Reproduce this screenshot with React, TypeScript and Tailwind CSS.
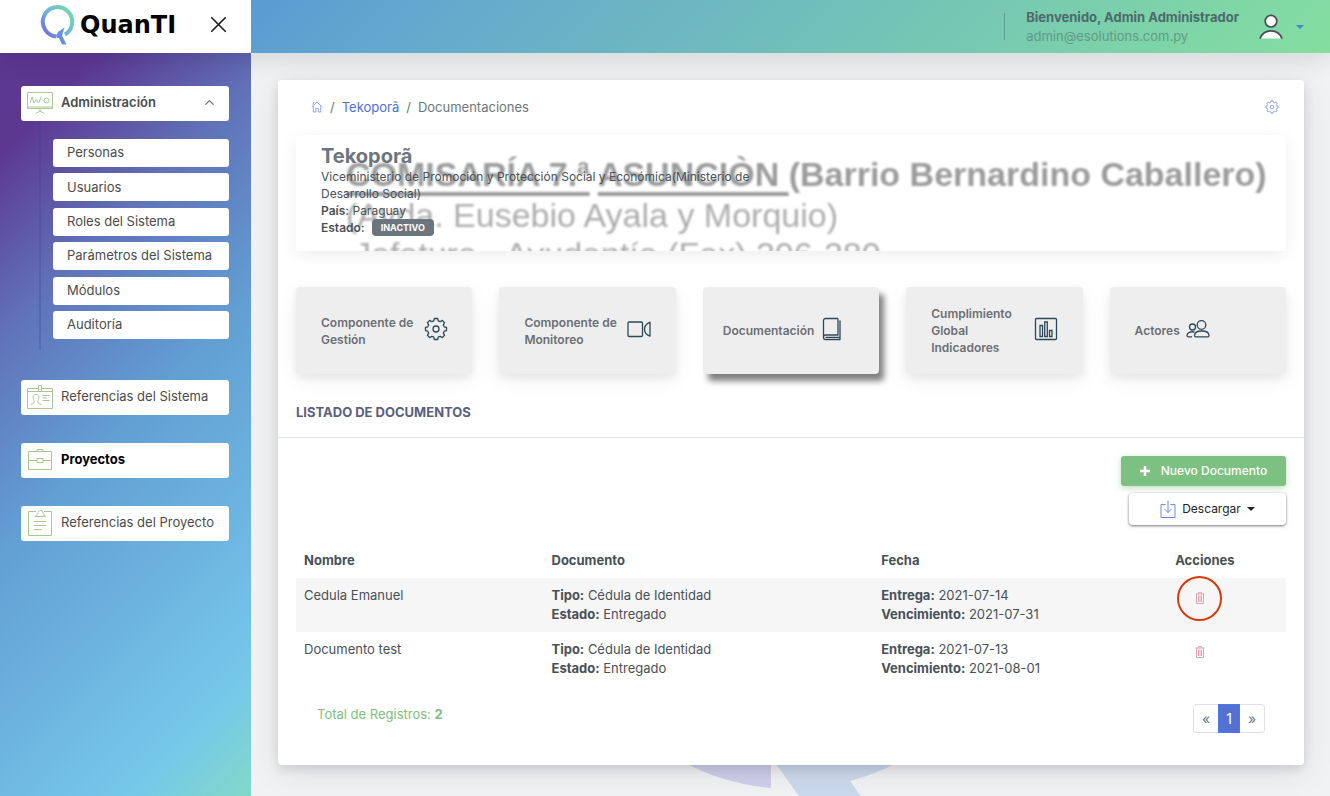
import React from 'react';
import { X, ChevronUp } from 'lucide-react';
import { clsx } from 'clsx';

type IconProps = { className?: string };

const Line = ({ className, box = '0 0 26 26', children }: IconProps & { box?: string; children: React.ReactNode }) => (
  <svg className={className} viewBox={box} fill="none" stroke="currentColor" aria-hidden="true">
    {children}
  </svg>
);

const BoardIcon = ({ className }: IconProps) => (
  <Line className={className}>
    <path d="M.500 2.500h25v16H.500zM.500 17h25M13 18.500v3M13 21l-4.500 2.500M13 21l4.500 2.500" />
    <path d="M3 13l2-6 2 6 2-3.500 2.500 3.500L14.500 6.500" />
    <circle cx="19.500" cy="10.500" r="2.500" />
  </Line>
);

const BadgeIcon = ({ className }: IconProps) => (
  <Line className={className}>
    <path d="M.500 4.500h11M14.500 4.500h11v20H.500v-20M.500 7.500h11M14.500 7.500h11M11.500 1.500h3v6h-3z" />
    <path d="M3.500 20.500c3-1 4.500-1.500 3.500-4C5 13 6.500 10.500 9 10.500s4 2.500 2 6c-1 2.500 .500 3 3.500 4M15.500 11.500h7M15.500 14h4.500M15.500 16.500h7" />
  </Line>
);

const BriefcaseIcon = ({ className }: IconProps) => (
  <Line className={className}>
    <path d="M1.500 4.500h23v18h-23zM10 4.500v-2h6v2M1.500 13.500H10M16 13.500h8.500M10 11.500h6v4h-6z" />
  </Line>
);

const ClipboardIcon = ({ className }: IconProps) => (
  <Line className={className}>
    <path d="M9 1.500H1.500v24h23v-24H17M8 6.500h10.500L16 3.500C16 1.500 15 .500 13.500 .500S11 1.500 11 3.500zM7 11.500h12M7 15.500h12M7 19.500h8" />
  </Line>
);

const gearPath =
  'M10.300 1.500h3.400l.500 2.300 2 .9 2.100-1.300 2.300 2.300-1.300 2.100.900 2 2.300.500v3.400l-2.300.500-.900 2 1.300 2.100-2.300 2.300-2.100-1.300-2 .900-.500 2.300h-3.400l-.500-2.300-2-.900-2.100 1.300-2.300-2.300 1.300-2.100-.900-2-2.300-.500v-3.400l2.300-.500.900-2-1.300-2.100 2.300-2.300 2.100 1.300 2-.900z';

const GearIcon = ({ className }: IconProps) => (
  <Line className={className} box="0 0 24 24">
    <path d={gearPath} strokeWidth="1.300" strokeLinejoin="round" />
    <circle cx="12" cy="12" r="3" strokeWidth="1.300" />
  </Line>
);

const VideoIcon = ({ className }: IconProps) => (
  <Line className={className} box="0 0 24 24">
    <rect x="1" y="5" width="14.500" height="14.500" rx="1.200" strokeWidth="1.300" />
    <path d="M23 5.200v14c-3.500-1.500-5.500-4-5.500-7s2-5.500 5.500-7z" strokeWidth="1.300" strokeLinejoin="round" />
  </Line>
);

const BookIcon = ({ className }: IconProps) => (
  <Line className={className} box="0 0 24 24">
    <path d="M18 1.500H5.500a2 2 0 0 0-2 2v17a2 2 0 0 0 2 2H20V3.500M18 1.500v16.500H5.500a2 2 0 0 0-2 2M20 20.300H5.500" strokeWidth="1.300" strokeLinejoin="round" />
  </Line>
);

const ChartIcon = ({ className }: IconProps) => (
  <Line className={className} box="0 0 24 24">
    <rect x="1.500" y="1.500" width="21" height="21" rx="1" strokeWidth="1.300" />
    <path d="M6 8.500h2.500v11H6zM10.700 5h2.600v14.500h-2.600zM15.500 13.500H18v6h-2.500z" strokeWidth="1.300" />
  </Line>
);

const PeopleIcon = ({ className }: IconProps) => (
  <Line className={className} box="0 0 24 24">
    <g strokeWidth="1.300">
      <circle cx="15.500" cy="8" r="4.300" />
      <circle cx="6.500" cy="10" r="3" />
      <path d="M8.500 18.500c0-3 3-4.500 7.200-4.500s7.300 1.500 7.300 4.500c0 .800-.500 1.300-1.300 1.300H9.800c-.8 0-1.300-.500-1.300-1.300zM8.500 15c-4-.800-7.500.700-7.500 3.300 0 1 .500 1.500 1.300 1.500H6" />
    </g>
  </Line>
);

const HomeIcon = ({ className }: IconProps) => (
  <Line className={className} box="0 0 12 12">
    <path d="M.700 6 6 1.200 11.300 6M2.300 5v6h2.500V7.300h2.400V11h2.500V5M2.300 3.800V1.500h1.200" strokeWidth=".8" />
  </Line>
);

const DownloadIcon = ({ className }: IconProps) => (
  <Line className={className} box="0 0 16 18">
    <path d="M5.500 4.500H1v13h14v-13h-4.500M8 .5v12M4.500 9 8 12.500 11.500 9" />
  </Line>
);

const TrashIcon = ({ className }: IconProps) => (
  <Line className={className} box="0 0 10 12">
    <path d="M.500 2h9M3.500 2V.600h3V2M1.500 2v9.500h7V2M3.500 3.500V10M5 3.500V10M6.500 3.500V10" strokeWidth=".9" />
  </Line>
);

const UserIcon = ({ className }: IconProps) => (
  <svg className={className} viewBox="0 0 26 27" fill="#fff" stroke="#484b55" strokeWidth="1.800" aria-hidden="true">
    <circle cx="13" cy="7.500" r="6" />
    <path d="M1.500 25.500C4 19.500 8 17.500 13 17.500s9 2 11.500 8" />
  </svg>
);

const Caret = ({ className }: IconProps) => (
  <svg className={className} viewBox="0 0 8 4" fill="currentColor" aria-hidden="true">
    <path d="M0 0h8L4 4z" />
  </svg>
);

const Logo = () => (
  <a href="#" className="flex items-center gap-1 text-black">
    <svg className="h-10 w-9" viewBox="0 0 36 40" fill="none" aria-hidden="true">
      <defs>
        <linearGradient id="ring" x1="4" y1="30" x2="30" y2="6" gradientUnits="userSpaceOnUse">
          <stop stopColor="#7867dc" />
          <stop offset=".5" stopColor="#68b5e2" />
          <stop offset="1" stopColor="#77d7ae" />
        </linearGradient>
      </defs>
      <path d="M16.500 31.500A14.700 14.700 0 1 1 25 29.500" stroke="url(#ring)" strokeWidth="4" />
      <path d="M24.500 22.500 18 27l-2 4 1.500 2 1.500 0 3 6.500h4.500l-4.500-9z" fill="#668fdf" />
    </svg>
    <span className="font-['DejaVu_Sans'] text-2xl leading-8 font-bold">QuanTI</span>
  </a>
);

const adminLinks = ['Personas', 'Usuarios', 'Roles del Sistema', 'Parámetros del Sistema', 'Módulos', 'Auditoría'];

const menu = [
  { label: 'Referencias del Sistema', icon: BadgeIcon, active: false },
  { label: 'Proyectos', icon: BriefcaseIcon, active: true },
  { label: 'Referencias del Proyecto', icon: ClipboardIcon, active: false },
];

const components = [
  { label: 'Componente de Gestión', icon: GearIcon, pad: 'pl-[25px]', text: 'w-[97px]' },
  { label: 'Componente de Monitoreo', icon: VideoIcon, pad: 'pl-[25px]', text: 'w-[97px]' },
  { label: 'Documentación', icon: BookIcon, pad: 'pl-5', text: '', active: true },
  { label: 'Cumplimiento Global Indicadores', icon: ChartIcon, pad: 'pl-[25px]', text: 'w-[97px]' },
  { label: 'Actores', icon: PeopleIcon, pad: 'pl-[25px]', text: '' },
];

const documents = [
  { name: 'Cedula Emanuel', type: 'Cédula de Identidad', status: 'Entregado', delivered: '2021-07-14', expires: '2021-07-31', marked: true },
  { name: 'Documento test', type: 'Cédula de Identidad', status: 'Entregado', delivered: '2021-07-13', expires: '2021-08-01', marked: false },
];

const Header = () => (
  <header className="relative z-20 flex h-[53px] shadow-[0_6px_24px_rgba(4,9,20,0.12)]">
    <div className="flex w-[251px] shrink-0 items-center justify-between bg-white pr-[19px] pb-1 pl-10">
      <Logo />
      <button type="button" aria-label="Cerrar menú" className="text-[#222]">
        <X size={27} strokeWidth={1.5} />
      </button>
    </div>
    <div className="flex flex-1 items-center justify-end bg-linear-[135deg,#5a9bd2_0%,#62a8cf_15%,#84de9f_100%] pr-[26px]">
      <div className="flex h-[27px] items-center border-l border-[#5e9f93] pl-[21px]">
        <div className="text-[13px] leading-[19px]">
          <p className="font-bold text-[#4d6a68]">Bienvenido, Admin Administrador</p>
          <p className="text-[#639b86]">admin@esolutions.com.py</p>
        </div>
      </div>
      <button type="button" aria-label="Cuenta" className="ml-[19px] flex items-center gap-3">
        <UserIcon className="h-[26px] w-[26px]" />
        <Caret className="h-1 w-2 text-[#4c82d0]" />
      </button>
    </div>
  </header>
);

const Sidebar = () => (
  <nav className="w-[251px] shrink-0 bg-linear-[135deg,#5c3891_0%,#5c3891_10%,#6071b8_28%,#629fd3_50%,#72bfe7_80%,#76c9e8_88%,#81d9c8_100%] pt-[33px] pr-[22px] pl-[21px] text-[13px] text-[#4b4b4b]">
    <button type="button" className="flex h-[35px] w-full items-center rounded-[3px] bg-white pr-3 pb-0.5 pl-1.5 font-semibold">
      <BoardIcon className="mr-2 h-[26px] w-[26px] text-[#a9c794]" />
      Administración
      <ChevronUp size={15} strokeWidth={2} className="ml-auto text-gray-500" />
    </button>
    <div className="ml-[18px] h-[229px] border-l-2 border-[#3b3b9a]/25 pt-[18px] pl-3">
      <ul className="flex h-[200px] flex-col justify-between">
        {adminLinks.map(label => (
          <li key={label}>
            <a href="#" className="flex h-7 items-center rounded-[3px] bg-white px-3.5">{label}</a>
          </li>
        ))}
      </ul>
    </div>
    <ul className="mt-[30px] space-y-7">
      {menu.map(item => (
        <li key={item.label}>
          <a href="#" className={clsx('flex h-[35px] items-center gap-2 rounded-[3px] bg-white px-1.5 pb-0.5', item.active && 'font-bold text-black')}>
            <item.icon className="h-[26px] w-[26px] text-[#a9c794]" />
            {item.label}
          </a>
        </li>
      ))}
    </ul>
  </nav>
);

const ProjectBanner = () => (
  <section className="relative mt-[15px] h-[116px] overflow-hidden rounded bg-white shadow-[0_4px_16px_rgba(4,9,20,0.07)]">
    <div className="absolute top-5 left-[50px] font-['Liberation_Sans'] text-[34px] leading-[39px] whitespace-nowrap text-[#adadad] blur-[1px]" aria-hidden="true">
      <p className="mb-0.5 font-bold text-[#9b9b9b]">
        <span className="underline decoration-4 underline-offset-6 [text-decoration-skip-ink:none]">COMISARÍA 7.ª</span>{' '}
        <span className="underline decoration-4 underline-offset-6 [text-decoration-skip-ink:none]">ASUNCIÒN </span>
        (Barrio Bernardino Caballero)
      </p>
      <p>(Avda. Eusebio Ayala y Morquio)</p>
      <p className="pl-2">Jefatura - Ayudantía (Fax) 206-280</p>
    </div>
    <div className="relative w-[465px] pt-[9px] pl-[25px] text-xs leading-[17px] text-[#495057]">
      <h1 className="text-xl leading-6 font-bold text-[#6c757d]">Tekoporã</h1>
      <p>Viceministerio de Promoción y Protección Social y Económica(Ministerio de Desarrollo Social)</p>
      <p><b className="font-semibold">País:</b> Paraguay</p>
      <p className="flex items-center gap-[7px]">
        <b className="font-semibold">Estado:</b>
        <span className="rounded bg-[#6c757d] px-[9px] text-[9px] font-bold text-white">INACTIVO</span>
      </p>
    </div>
  </section>
);

const Documents = () => (
  <table className="mt-[18px] w-full table-fixed text-left leading-[19px] text-[#495057]">
    <thead>
      <tr className="h-[35px] align-middle">
        <th className="w-[25%] px-2">Nombre</th>
        <th className="w-[33.3%] px-2">Documento</th>
        <th className="px-2">Fecha</th>
        <th className="w-[12%] px-2">Acciones</th>
      </tr>
    </thead>
    <tbody>
      {documents.map(doc => (
        <tr key={doc.name} className="align-top odd:bg-[#f6f6f7]">
          <td className="p-2">{doc.name}</td>
          <td className="p-2">
            <p><b>Tipo:</b> {doc.type}</p>
            <p><b>Estado:</b> {doc.status}</p>
          </td>
          <td className="p-2">
            <p><b>Entrega:</b> {doc.delivered}</p>
            <p><b>Vencimiento:</b> {doc.expires}</p>
          </td>
          <td className="p-2">
            <button type="button" aria-label={`Eliminar ${doc.name}`} className="relative flex h-6 w-[50px] items-center justify-center text-[#e09aa7]">
              <TrashIcon className="h-3 w-2.5" />
              {doc.marked && <span className="absolute -top-2.5 left-0.5 h-[45px] w-[45px] rounded-full border-2 border-[#d83a0c]" />}
            </button>
          </td>
        </tr>
      ))}
    </tbody>
  </table>
);

const Watermark = () => (
  <svg className="absolute bottom-0 left-1/2 h-10 w-60 -translate-x-1/2" viewBox="0 0 240 40" aria-hidden="true">
    <path d="M0 -1A230 230 0 0 0 100 32V0z" fill="#cfcfec" />
    <path d="M99 0l29 40h62l-11-15A230 230 0 0 0 240 -1z" fill="#cbd9ec" />
  </svg>
);

export default function App() {
  return (
    <div className="flex min-h-screen flex-col bg-[#f1f2f4] font-['Inter','Liberation_Sans',sans-serif] text-[13px]">
      <Header />
      <div className="flex flex-1">
        <Sidebar />
        <main className="relative min-w-0 flex-1 pt-[27px] pr-[26px] pb-[30px] pl-[27px]">
          <Watermark />
          <div className="relative rounded bg-white px-[18px] pb-8 shadow-[0_7px_35px_rgba(4,9,20,0.08),0_4px_12px_rgba(4,9,20,0.12)]">
            <div className="flex items-center justify-between pt-[17px] pr-[7px] pl-[15px] leading-5">
              <ol className="flex items-center gap-[7px] text-[#6c757d]">
                <li><a href="#" aria-label="Inicio"><HomeIcon className="h-3 w-3 text-[#7b90e6]" /></a></li>
                <li>/</li>
                <li><a href="#" className="text-[#4d6fd6]">Tekoporã</a></li>
                <li>/</li>
                <li>Documentaciones</li>
              </ol>
              <button type="button" aria-label="Configuración" className="text-[#6f86e0]">
                <GearIcon className="h-3.5 w-3.5" />
              </button>
            </div>
            {/* keeps the banner below the breadcrumb row */}
            <div className="pt-[3px]"><ProjectBanner /></div>

            <div className="mt-9 grid grid-cols-5 gap-[27px]">
              {components.map(c => (
                <a
                  key={c.label}
                  href="#"
                  className={clsx(
                    'flex h-[87px] items-center gap-1.5 rounded bg-[#eee] text-xs leading-[17px] font-semibold text-[#6c6f75]',
                    c.pad,
                    c.active ? 'shadow-[5px_7px_6px_rgba(0,0,0,0.5)]' : 'shadow-[0_7px_24px_rgba(4,9,20,0.05),0_4px_9px_rgba(4,9,20,0.07)]',
                  )}
                >
                  <span className={c.text}>{c.label}</span>
                  <c.icon className="mb-1 h-6 w-6 shrink-0 text-[#2f4858]" />
                </a>
              ))}
            </div>

            <h2 className="-mx-[18px] mt-7 border-b border-[#e2e3e5] px-[18px] pb-[15px] leading-5 font-bold text-[#5a6080]">
              LISTADO DE DOCUMENTOS
            </h2>

            <div className="mt-[18px] flex flex-col items-end gap-[7px]">
              <button type="button" className="flex h-[30px] w-[165px] items-center justify-center gap-[11px] rounded-[3px] bg-[#7cc082] text-xs font-medium text-white shadow-[0_2px_6px_rgba(124,192,130,0.5)]">
                <svg className="h-2.5 w-2.5" viewBox="0 0 10 10" stroke="currentColor" strokeWidth="2.500" aria-hidden="true">
                  <path d="M5 0v10M0 5h10" />
                </svg>
                Nuevo Documento
              </button>
              <button type="button" className="flex h-8 w-[157px] items-center justify-center gap-1.5 rounded bg-white text-xs text-[#212529] shadow-[0_1px_3px_rgba(0,0,0,0.55)]">
                <DownloadIcon className="h-[18px] w-4 text-[#6f8be6]" />
                Descargar
                <Caret className="h-1 w-2" />
              </button>
            </div>

            <Documents />

            <div className="mt-[18px] flex justify-between px-[21px]">
              <p className="leading-[21px] text-[#7cc082]">Total de Registros: <b>2</b></p>
              <div className="flex h-[29px] rounded-[3px] border border-[#dee2e6] text-sm text-[#6c757d]">
                <button type="button" className="w-6">«</button>
                <button type="button" className="-my-px w-[22px] border border-[#4a7cf0] bg-[#5470d2] text-white">1</button>
                <button type="button" className="w-6">»</button>
              </div>
            </div>
          </div>
        </main>
      </div>
    </div>
  );
}
